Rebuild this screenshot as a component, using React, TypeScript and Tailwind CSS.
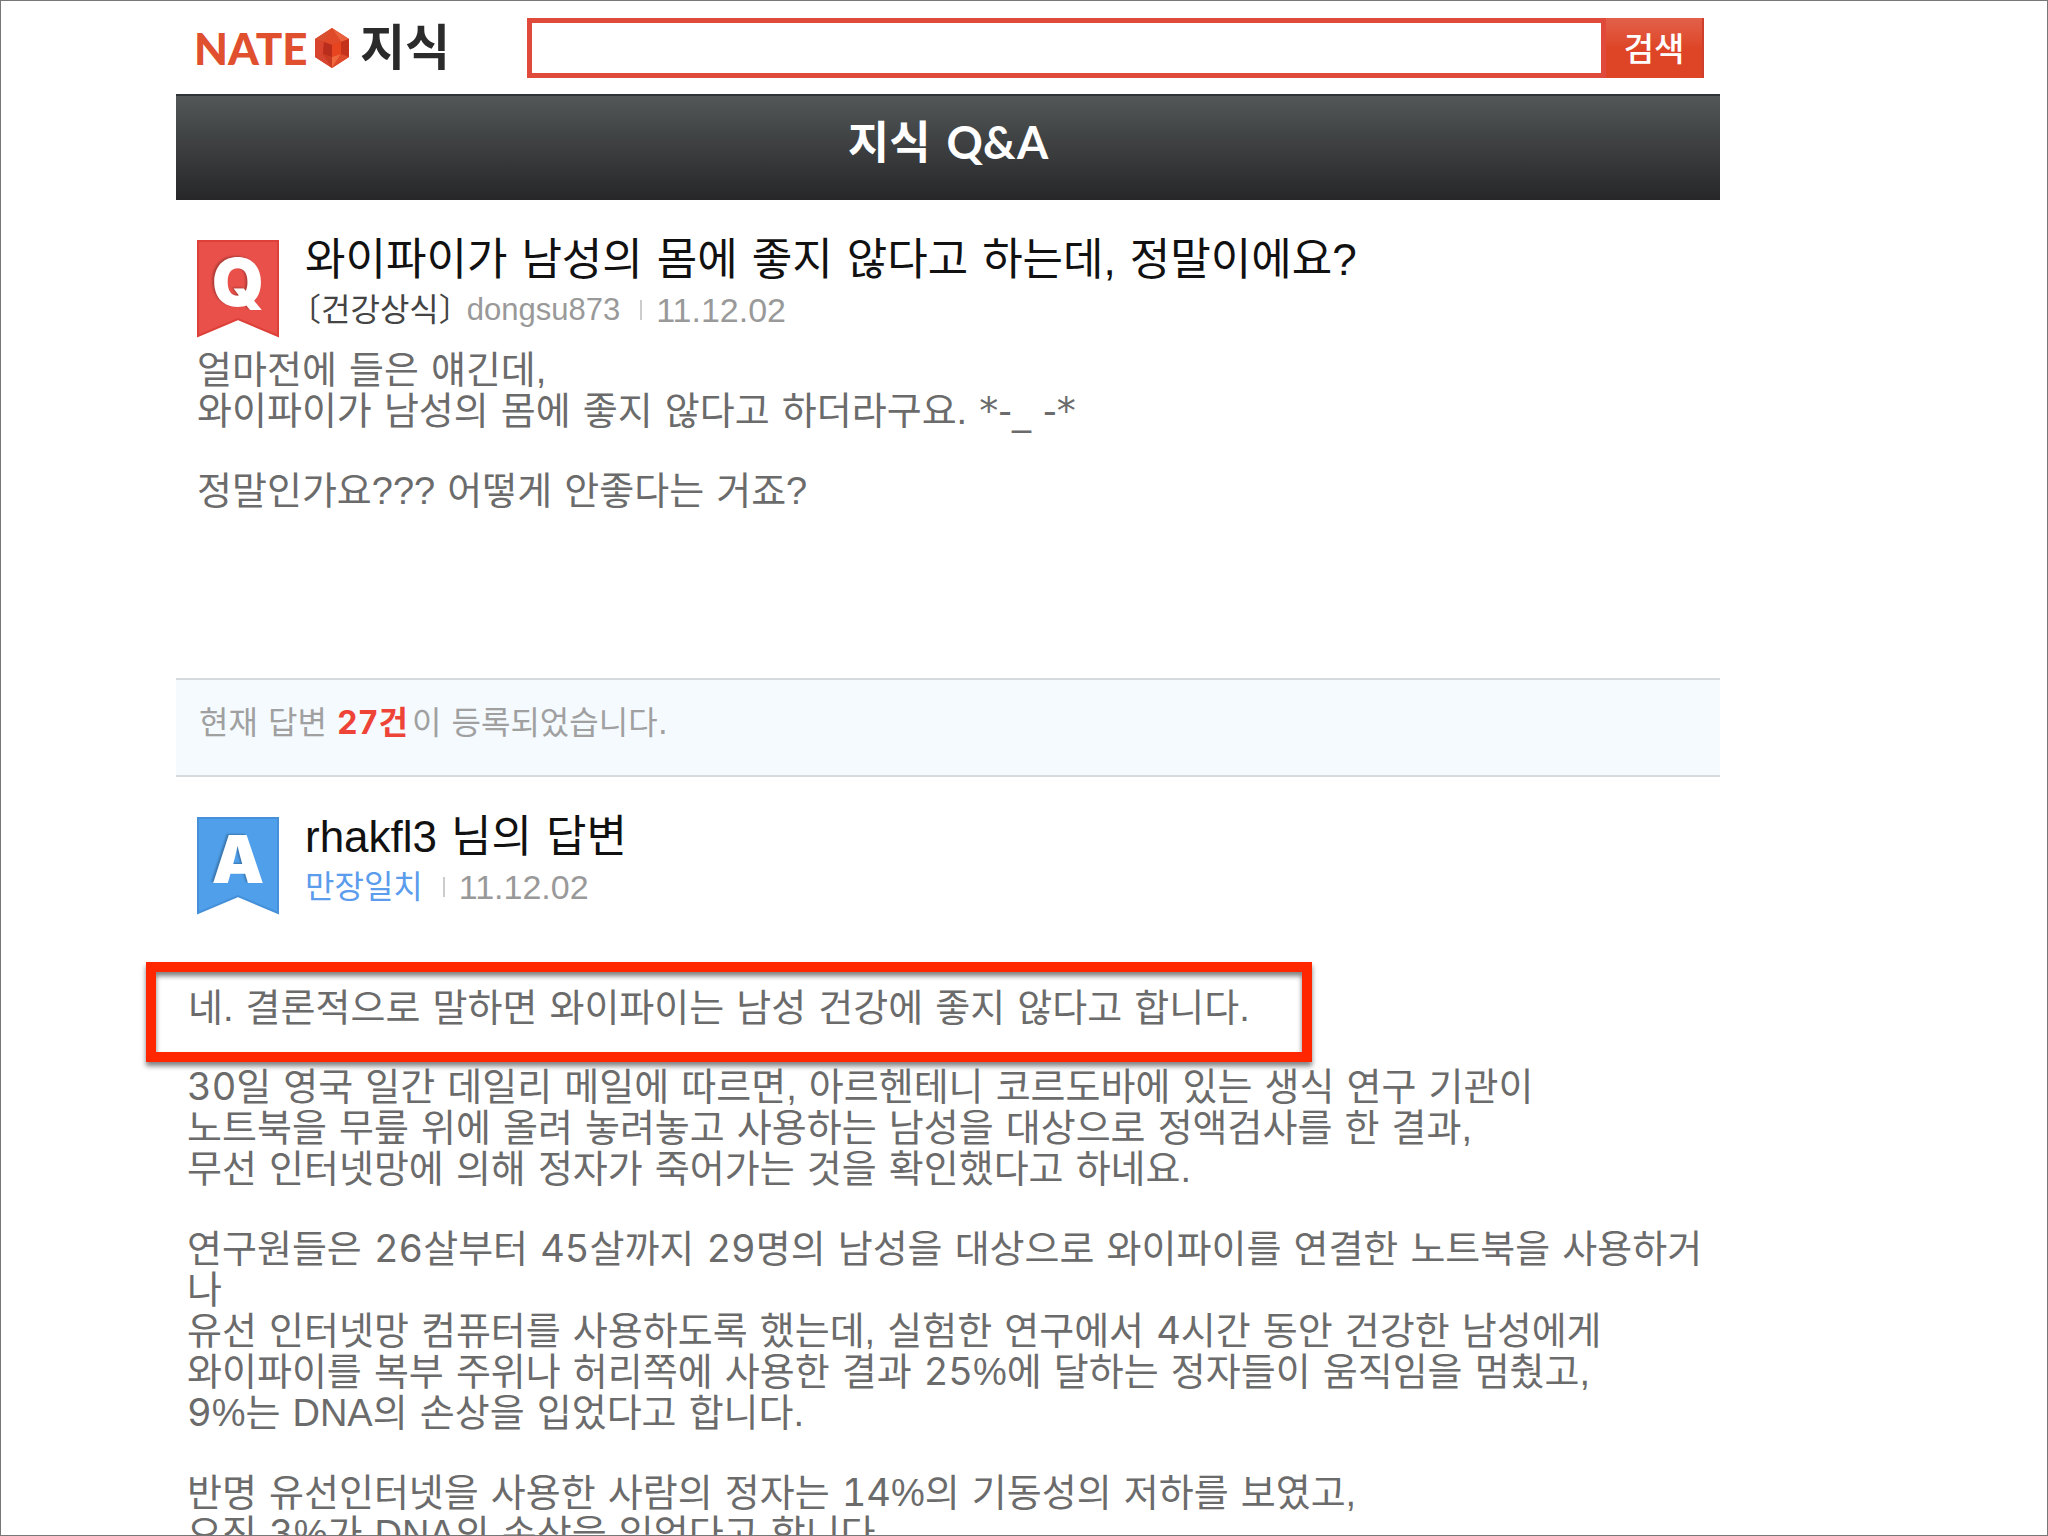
import { ReactNode } from 'react';

interface Post {
    title: string;
    date: string;
}

const question: Post = {
    title: '와이파이가 남성의 몸에 좋지 않다고 하는데, 정말이에요?',
    date: '11.12.02',
};

const answer: Post = {
    title: 'rhakfl3 님의 답변',
    date: '11.12.02',
};

const questionBody = ['얼마전에 들은 얘긴데,\n와이파이가 남성의 몸에 좋지 않다고 하더라구요. *-_ -*', '정말인가요??? 어떻게 안좋다는 거죠?'];

const answerBody = [
    '30일 영국 일간 데일리 메일에 따르면, 아르헨테니 코르도바에 있는 생식 연구 기관이\n노트북을 무릎 위에 올려 놓려놓고 사용하는 남성을 대상으로 정액검사를 한 결과,\n무선 인터넷망에 의해 정자가 죽어가는 것을 확인했다고 하네요.',
    '연구원들은 26살부터 45살까지 29명의 남성을 대상으로 와이파이를 연결한 노트북을 사용하거나\n유선 인터넷망 컴퓨터를 사용하도록 했는데, 실험한 연구에서 4시간 동안 건강한 남성에게\n와이파이를 복부 주위나 허리쪽에 사용한 결과 25%에 달하는 정자들이 움직임을 멈췄고,\n9%는 DNA의 손상을 입었다고 합니다.',
    '반명 유선인터넷을 사용한 사람의 정자는 14%의 기동성의 저하를 보였고,\n오직 3%가 DNA의 손상을 입었다고 합니다.',
];

// Digits and Latin words get their own faces, Hangul and spaces inherit
function Mixed({ text }: { text: string }) {
    return text.split(/([A-Za-z]\w*|\d+|[%?.,]+)/).map((part, i) => {
        if (i % 2 === 0) return part;
        return (
            <span
                key={i}
                className={/^\d/.test(part) ? "font-['Inter',sans-serif] leading-none tabular-nums" : "font-['Liberation_Sans',sans-serif] leading-none"}
            >
                {part}
            </span>
        );
    });
}

function Gem() {
    return (
        <svg viewBox="0 0 36 42" className="h-[42px] w-9" aria-hidden="true">
            <path d="M18 1 35 12V30L18 41 1 30V12Z" fill="#d63a22" />
            <path d="M18 1 35 12 27 15Z" fill="#e8603c" />
            <path d="M18 1 27 15 18 18 10 15Z" fill="#e04a28" />
            <path d="M18 1 10 15 1 12Z" fill="#d9502f" />
            <path d="M1 12 10 15 9 27 1 30Z" fill="#d8442e" />
            <path d="M10 15 18 18 18 30 9 27Z" fill="#b92d1d" />
            <path d="M18 18 27 15 27 27 18 30Z" fill="#e8441f" />
            <path d="M27 15 35 12V30L27 27Z" fill="#c5321c" />
            <path d="M1 30 9 27 18 41Z" fill="#d6452f" />
            <path d="M9 27 18 30 18 41Z" fill="#c93a22" />
            <path d="M18 30 27 27 18 41Z" fill="#f0693c" />
            <path d="M35 30 27 27 18 41Z" fill="#de4a2a" />
        </svg>
    );
}

function Badge({ letter, fill, stroke }: { letter: string; fill: string; stroke: string }) {
    return (
        <svg viewBox="0 0 82 98" className="mt-[5px] h-[98px] w-[82px] shrink-0 overflow-visible">
            <path d="M1 1H81V96L41 79 1 96Z" fill={fill} stroke={stroke} strokeWidth="2" />
            <text
                x="41"
                y="66"
                textAnchor="middle"
                fill="#fff"
                className="font-['Inter',sans-serif] text-[66px] font-black [text-shadow:-2px_-1px_2px_rgba(0,0,0,0.25)]"
            >
                {letter}
            </text>
        </svg>
    );
}

function PostHeader({ badge, title, children }: { badge: ReactNode; title: string; children: ReactNode }) {
    return (
        <div className="flex gap-[26px] pt-[35px] pl-[21px]">
            {badge}
            <div>
                <h2 className="text-[44px] leading-[50px] text-[#111]">
                    <Mixed text={title} />
                </h2>
                <p className="flex items-center text-[32px] leading-[50px] text-[#999]">{children}</p>
            </div>
        </div>
    );
}

function PostDate({ date }: { date: string }) {
    return (
        <>
            <span className="mr-3.5 ml-5 h-5 w-0.5 bg-[#ccc]" />
            <time className="font-['Liberation_Sans',sans-serif] text-[34px]">{date}</time>
        </>
    );
}

function Paragraphs({ items }: { items: string[] }) {
    return (
        <div className="flex flex-col gap-[39px] text-[38px] leading-[41px] whitespace-pre-line text-[#6b6b6b]">
            {items.map((item) => (
                <p key={item}>
                    <Mixed text={item} />
                </p>
            ))}
        </div>
    );
}

function App() {
    return (
        <div className="h-screen overflow-hidden border border-[#777] bg-white font-['DejaVu_Sans','Noto_Sans_CJK_KR',sans-serif]">
            <div className="mr-[327px] ml-[175px]">
                <header className="flex h-[93px] items-center px-4">
                    <a href="#" className="flex w-[335px] shrink-0 items-center pl-0.5">
                        <span className="w-[120px] font-['Lato',sans-serif] text-[44px] leading-none font-black text-[#e0502f]">NATE</span>
                        <Gem />
                        <span className="ml-[10px] pb-2 font-['Noto_Sans_CJK_KR',sans-serif] text-[49px] leading-none font-bold text-[#2b2b2b]">
                            지식
                        </span>
                    </a>
                    <form className="flex h-[60px] flex-1" onSubmit={(e) => e.preventDefault()}>
                        <input type="text" aria-label="검색" className="min-w-0 flex-1 border-[5px] border-[#df4a3a] bg-white px-3 text-3xl outline-none" />
                        <button
                            type="submit"
                            className="w-[98px] border-r-2 border-[#cf3f2c] bg-linear-to-b from-[#e2604a] to-[#de4526] to-50% font-['Noto_Sans_CJK_KR',sans-serif] text-[33px] leading-none font-medium text-white"
                        >
                            검색
                        </button>
                    </form>
                </header>

                <div className="flex h-[106px] items-center justify-center border-t-2 border-[#2f3335] bg-linear-to-b from-[#525757] to-[#27272a] pb-3">
                    <h1 className="flex gap-4 font-['Lato','Noto_Sans_CJK_KR',sans-serif] text-[45px] leading-none font-bold text-white">
                        <span>지식</span> <span>Q&amp;A</span>
                    </h1>
                </div>

                <main>
                    <article className="pb-[166px]">
                        <PostHeader badge={<Badge letter="Q" fill="#e9504a" stroke="#dd4038" />} title={question.title}>
                            <span className="mr-3 text-[#444] [font-feature-settings:'halt']">〔건강상식〕</span>
                            <span className="font-['Liberation_Sans',sans-serif] text-[31px]">dongsu873</span>
                            <PostDate date={question.date} />
                        </PostHeader>
                        <div className="mt-3 pl-[21px]">
                            <Paragraphs items={questionBody} />
                        </div>
                    </article>

                    <p className="border-y-2 border-[#d6dadc] bg-[#f4fafe] pt-5 pb-7 pl-[23px] text-[32px] leading-[47px] text-[#a0a0a0]">
                        현재 답변{' '}
                        <strong className="mr-1 text-[#ee4438]">
                            <Mixed text="27건" />
                        </strong>
                        이 등록되었습니다.
                    </p>

                    <article>
                        <PostHeader badge={<Badge letter="A" fill="#4f9fea" stroke="#4590d8" />} title={answer.title}>
                            <a href="#" className="text-[#5b9cec]">
                                만장일치
                            </a>
                            <PostDate date={answer.date} />
                        </PostHeader>
                        <p className="mt-[47px] -ml-[30px] h-[100px] w-[1166px] max-w-full border-[10px] border-[#ff2600] pt-4 pl-8 text-[38px] leading-[41px] text-[#6b6b6b] shadow-[0_4px_5px_rgba(0,0,0,0.5),inset_0_4px_5px_rgba(0,0,0,0.5)]">
                            <Mixed text="네. 결론적으로 말하면 와이파이는 남성 건강에 좋지 않다고 합니다." />
                        </p>
                        <div className="mt-[5px] pr-4 pl-[11px]">
                            <Paragraphs items={answerBody} />
                        </div>
                    </article>
                </main>
            </div>
        </div>
    );
}

export default App;
